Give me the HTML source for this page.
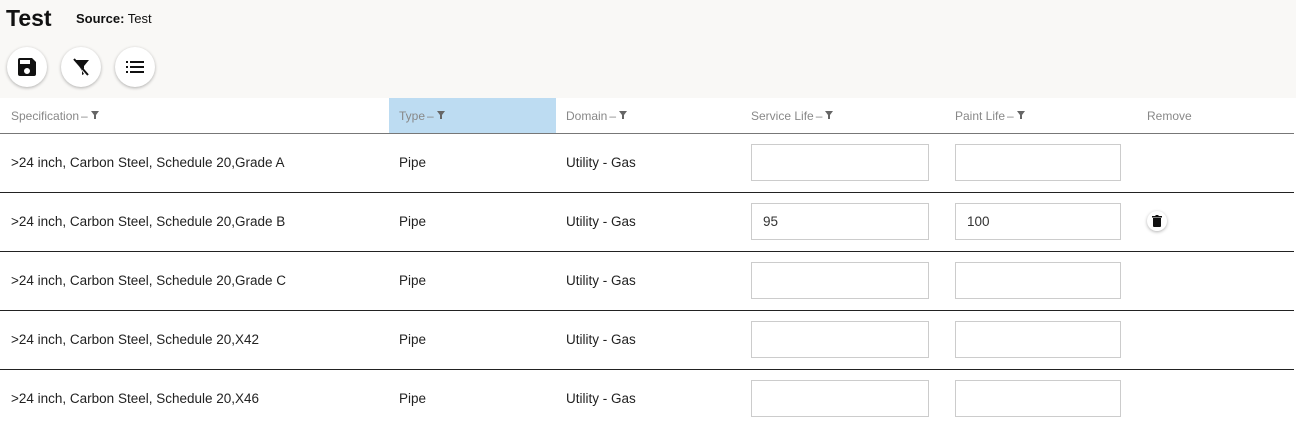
<!DOCTYPE html>
<html><head><style>
*{box-sizing:border-box;margin:0;padding:0}
body{width:1296px;height:427px;background:#fff;font-family:"Liberation Sans",Arial,sans-serif;position:relative;overflow:hidden;color:#222}
.top{position:absolute;left:0;top:0;width:1296px;height:98px;background:#f9f8f6}
.t{position:absolute;left:6px;top:5px;font-size:23px;font-weight:bold;color:#111}
.src{position:absolute;left:76px;top:11px;font-size:13px;color:#111}
.btn{position:absolute;top:47px;width:40px;height:40px;border-radius:50%;background:#fff;box-shadow:0 1px 3px rgba(0,0,0,.3);display:flex;align-items:center;justify-content:center}
.h{position:absolute;top:109px;font-size:12px;color:#888}
.h span{margin:0 3px 0 2px}
.h svg{vertical-align:1px}
.a{position:absolute;font-size:13.5px;color:#222}
.line{position:absolute;left:0;width:1294px;height:1px;background:#222}
.in{position:absolute;height:37px;border:1px solid #ccc;font-size:13.5px;padding:10px 0 0 11px;color:#333}
</style></head><body>
<div class="top"></div>
<div class="t">Test</div>
<div class="src"><b>Source:</b> Test</div>
<div class="btn" style="left:7px"><svg width="24" height="24" viewBox="0 0 24 24"><path d="M17 3H5a2 2 0 0 0-2 2v14a2 2 0 0 0 2 2h14a2 2 0 0 0 2-2V7l-4-4zm-5 16a3 3 0 1 1 0-6 3 3 0 0 1 0 6zm3-10H5V5h10v4z" fill="#111"/></svg></div>
<div class="btn" style="left:61px"><svg width="24" height="24" viewBox="0 0 24 24"><path d="M6 5h14l-5 6v3z" fill="#111"/><path d="M10 11l3 4v5l2-1" fill="#111"/><path d="M5 4l14 16" stroke="#111" stroke-width="2"/></svg></div>
<div class="btn" style="left:115px"><svg width="24" height="24" viewBox="0 0 24 24"><path d="M3 6h2v2H3zm4 0h14v2H7zM3 11h2v2H3zm4 0h14v2H7zM3 16h2v2H3zm4 0h14v2H7z" fill="#111"/></svg></div>
<div style="position:absolute;left:389px;top:98px;width:167px;height:35px;background:#bddcf2"></div>
<div class="h" style="left:11px">Specification<span>–</span><svg width="8" height="8" viewBox="0 0 8 8"><path d="M0 0h8L5 4v4H3V4z" fill="#666"/></svg></div>
<div class="h" style="left:399px">Type<span>–</span><svg width="8" height="8" viewBox="0 0 8 8"><path d="M0 0h8L5 4v4H3V4z" fill="#666"/></svg></div>
<div class="h" style="left:566px">Domain<span>–</span><svg width="8" height="8" viewBox="0 0 8 8"><path d="M0 0h8L5 4v4H3V4z" fill="#666"/></svg></div>
<div class="h" style="left:751px">Service Life<span>–</span><svg width="8" height="8" viewBox="0 0 8 8"><path d="M0 0h8L5 4v4H3V4z" fill="#666"/></svg></div>
<div class="h" style="left:955px">Paint Life<span>–</span><svg width="8" height="8" viewBox="0 0 8 8"><path d="M0 0h8L5 4v4H3V4z" fill="#666"/></svg></div>
<div class="h" style="left:1147px">Remove</div>
<div class="line" style="top:133px;background:#777"></div>
<div class="a" style="left:11px;top:155px">&gt;24 inch, Carbon Steel, Schedule 20,Grade A</div><div class="a" style="left:399px;top:155px">Pipe</div><div class="a" style="left:566px;top:155px">Utility - Gas</div>
<div class="in" style="left:751px;top:144px;width:178px"></div><div class="in" style="left:955px;top:144px;width:166px"></div>
<div class="line" style="top:192px"></div>
<div class="a" style="left:11px;top:214px">&gt;24 inch, Carbon Steel, Schedule 20,Grade B</div><div class="a" style="left:399px;top:214px">Pipe</div><div class="a" style="left:566px;top:214px">Utility - Gas</div>
<div class="in" style="left:751px;top:203px;width:178px">95</div><div class="in" style="left:955px;top:203px;width:166px">100</div>
<div style="position:absolute;left:1147px;top:211px;width:20px;height:20px;border-radius:50%;background:#fff;box-shadow:0 1px 3px rgba(0,0,0,.3);display:flex;align-items:center;justify-content:center"><svg width="10" height="12" viewBox="0 0 10 12"><path d="M0 1h3l1-1h2l1 1h3v1.5H0zM1 3h8v8a1 1 0 0 1-1 1H2a1 1 0 0 1-1-1z" fill="#111"/></svg></div>
<div class="line" style="top:251px"></div>
<div class="a" style="left:11px;top:273px">&gt;24 inch, Carbon Steel, Schedule 20,Grade C</div><div class="a" style="left:399px;top:273px">Pipe</div><div class="a" style="left:566px;top:273px">Utility - Gas</div>
<div class="in" style="left:751px;top:262px;width:178px"></div><div class="in" style="left:955px;top:262px;width:166px"></div>
<div class="line" style="top:310px"></div>
<div class="a" style="left:11px;top:332px">&gt;24 inch, Carbon Steel, Schedule 20,X42</div><div class="a" style="left:399px;top:332px">Pipe</div><div class="a" style="left:566px;top:332px">Utility - Gas</div>
<div class="in" style="left:751px;top:321px;width:178px"></div><div class="in" style="left:955px;top:321px;width:166px"></div>
<div class="line" style="top:369px"></div>
<div class="a" style="left:11px;top:391px">&gt;24 inch, Carbon Steel, Schedule 20,X46</div><div class="a" style="left:399px;top:391px">Pipe</div><div class="a" style="left:566px;top:391px">Utility - Gas</div>
<div class="in" style="left:751px;top:380px;width:178px"></div><div class="in" style="left:955px;top:380px;width:166px"></div>
</body></html>
